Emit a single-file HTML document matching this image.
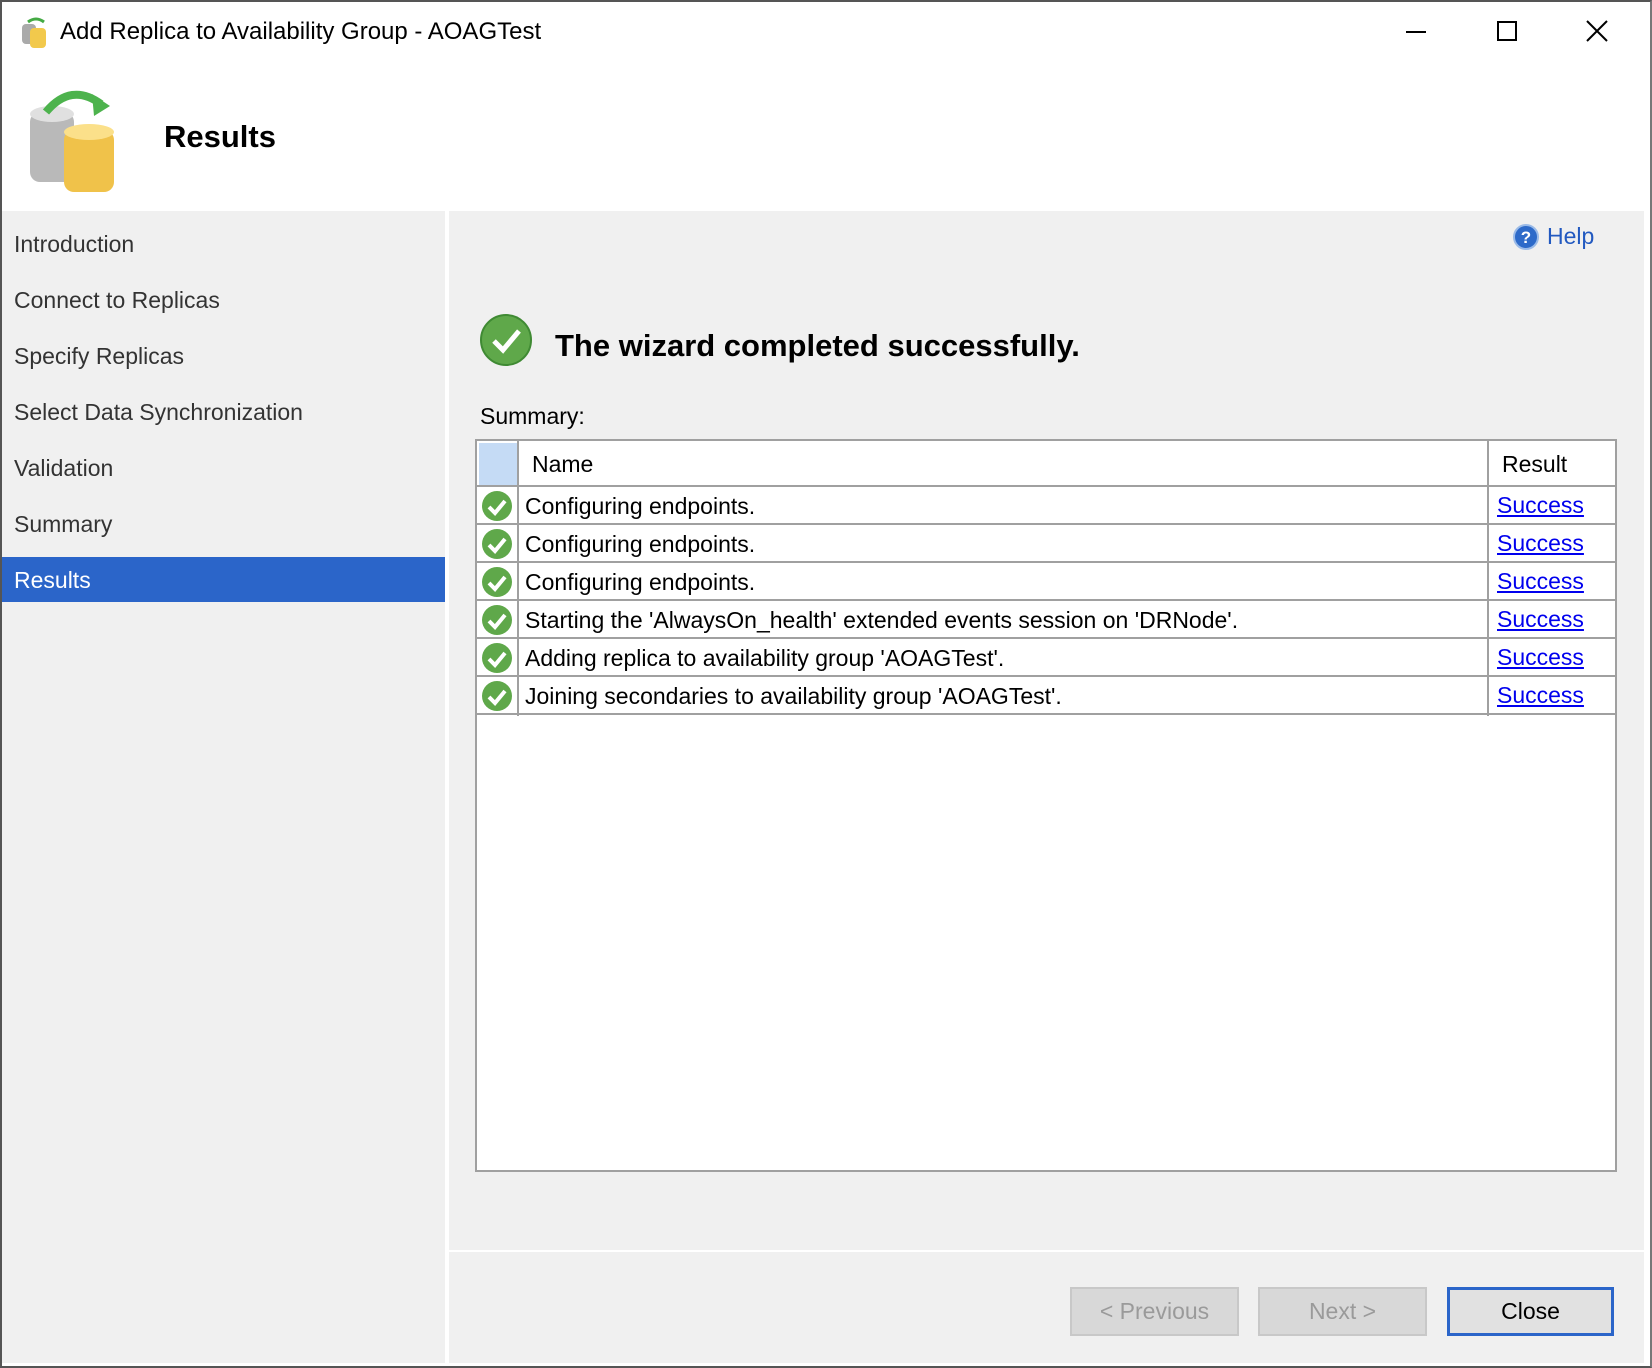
<!DOCTYPE html>
<html><head><meta charset="utf-8"><style>
*{margin:0;padding:0;box-sizing:border-box}
body{width:1652px;height:1368px;background:#fff;font-family:"Liberation Sans",sans-serif;position:relative;overflow:hidden;color:#000}
.a{position:absolute}
.side{left:2px;top:211px;width:443px;height:1152px;background:#f0f0f0}
.si{position:absolute;left:12px;font-size:23px;color:#333}
.main{left:449px;top:211px;width:1195px;height:1152px;background:#f0f0f0}
.tbl{left:475px;top:439px;width:1142px;height:733px;background:#fff;border:2px solid #a0a0a0}
.row{position:absolute;left:0;width:1138px;height:38px;border-bottom:2px solid #a0a0a0;font-size:23px}
.row .t{position:absolute;left:48px;top:6px}
.row .l{position:absolute;left:1020px;top:5px;color:#0000ee;text-decoration:underline}
.btn{position:absolute;top:1287px;height:49px;border:2px solid #c8c8c8;background:#d8d8d8;color:#9a9a9a;font-size:23px;text-align:center;line-height:45px}
</style></head><body>
<div class="a" style="left:0;top:0;width:1652px;height:1368px;border:2px solid #555;border-right:2px solid #777;border-bottom:2px solid #555"></div>
<svg class="a" style="left:20px;top:16px" width="30" height="34"><rect x="2" y="8" width="14" height="20" rx="4" fill="#aaa"/><rect x="10" y="12" width="16" height="20" rx="4" fill="#f2c94c"/><path d="M8 6 Q16 0 24 6" stroke="#4a4" stroke-width="3" fill="none"/></svg>
<div class="a" style="left:60px;top:18px;font-size:24px">Add Replica to Availability Group - AOAGTest</div>
<div class="a" style="left:1406px;top:31px;width:20px;height:2px;background:#000"></div>
<div class="a" style="left:1497px;top:21px;width:20px;height:20px;border:2px solid #000"></div>
<svg class="a" style="left:1586px;top:20px" width="22" height="22"><path d="M1 1L21 21M21 1L1 21" stroke="#000" stroke-width="2"/></svg>
<svg class="a" style="left:26px;top:82px" width="100" height="115">
<rect x="4" y="30" width="44" height="70" rx="10" fill="#b9b9b9"/><ellipse cx="26" cy="32" rx="22" ry="8" fill="#e0e0e0"/>
<rect x="38" y="48" width="50" height="62" rx="10" fill="#f0c24a"/><ellipse cx="63" cy="50" rx="25" ry="8" fill="#fbe08a"/>
<path d="M20 30 Q45 0 75 22" stroke="#4db34d" stroke-width="8" fill="none"/><path d="M66 12 L84 24 L68 34Z" fill="#4db34d"/>
</svg>
<div class="a" style="left:164px;top:119px;font-size:31px;font-weight:bold">Results</div>
<div class="a side">
<div class="si" style="top:20px">Introduction</div>
<div class="si" style="top:76px">Connect to Replicas</div>
<div class="si" style="top:132px">Specify Replicas</div>
<div class="si" style="top:188px">Select Data Synchronization</div>
<div class="si" style="top:244px">Validation</div>
<div class="si" style="top:300px">Summary</div>
<div class="a" style="left:0;top:346px;width:443px;height:45px;background:#2b65c9"></div>
<div class="si" style="top:356px;color:#fff">Results</div>
</div>
<div class="a main">
<div class="a" style="left:0;top:1039px;width:1195px;height:2px;background:#fff"></div>
</div>
<svg class="a" style="left:1512px;top:223px" width="28" height="28"><circle cx="14" cy="14" r="12" fill="#2d6ac9" stroke="#9bbbe8" stroke-width="2"/><text x="14" y="20" font-size="17" font-weight="bold" fill="#fff" text-anchor="middle" font-family="Liberation Sans">?</text></svg>
<div class="a" style="left:1547px;top:223px;font-size:23px;color:#2259c0">Help</div>
<svg class="a" style="left:479px;top:313px" width="54" height="54"><circle cx="27" cy="27" r="25" fill="#5fa84a" stroke="#3f8a33" stroke-width="2"/><path d="M15 28 L24 37 L40 18" stroke="#fff" stroke-width="5" fill="none"/></svg>
<div class="a" style="left:555px;top:328px;font-size:31px;font-weight:bold">The wizard completed successfully.</div>
<div class="a" style="left:480px;top:403px;font-size:23px">Summary:</div>
<div class="a tbl">
<div class="a" style="left:2px;top:2px;width:38px;height:42px;background:#c5dbf5"></div>
<div class="a" style="left:40px;top:0;width:2px;height:275px;background:#a0a0a0"></div>
<div class="a" style="left:1010px;top:0;width:2px;height:275px;background:#a0a0a0"></div>
<div class="a" style="left:55px;top:10px;font-size:23px">Name</div>
<div class="a" style="left:1025px;top:10px;font-size:23px">Result</div>
<div class="a" style="left:0;top:44px;width:1138px;height:2px;background:#a0a0a0"></div>
<div class="row" style="top:46px"><svg class="a" style="left:4px;top:3px" width="32" height="32"><circle cx="16" cy="16" r="15" fill="#5fa84a"/><path d="M8 17 L14 23 L24 11" stroke="#fff" stroke-width="4" fill="none"/></svg><span class="t">Configuring endpoints.</span><span class="l">Success</span></div>
<div class="row" style="top:84px"><svg class="a" style="left:4px;top:3px" width="32" height="32"><circle cx="16" cy="16" r="15" fill="#5fa84a"/><path d="M8 17 L14 23 L24 11" stroke="#fff" stroke-width="4" fill="none"/></svg><span class="t">Configuring endpoints.</span><span class="l">Success</span></div>
<div class="row" style="top:122px"><svg class="a" style="left:4px;top:3px" width="32" height="32"><circle cx="16" cy="16" r="15" fill="#5fa84a"/><path d="M8 17 L14 23 L24 11" stroke="#fff" stroke-width="4" fill="none"/></svg><span class="t">Configuring endpoints.</span><span class="l">Success</span></div>
<div class="row" style="top:160px"><svg class="a" style="left:4px;top:3px" width="32" height="32"><circle cx="16" cy="16" r="15" fill="#5fa84a"/><path d="M8 17 L14 23 L24 11" stroke="#fff" stroke-width="4" fill="none"/></svg><span class="t">Starting the 'AlwaysOn_health' extended events session on 'DRNode'.</span><span class="l">Success</span></div>
<div class="row" style="top:198px"><svg class="a" style="left:4px;top:3px" width="32" height="32"><circle cx="16" cy="16" r="15" fill="#5fa84a"/><path d="M8 17 L14 23 L24 11" stroke="#fff" stroke-width="4" fill="none"/></svg><span class="t">Adding replica to availability group 'AOAGTest'.</span><span class="l">Success</span></div>
<div class="row" style="top:236px"><svg class="a" style="left:4px;top:3px" width="32" height="32"><circle cx="16" cy="16" r="15" fill="#5fa84a"/><path d="M8 17 L14 23 L24 11" stroke="#fff" stroke-width="4" fill="none"/></svg><span class="t">Joining secondaries to availability group 'AOAGTest'.</span><span class="l">Success</span></div>
</div>
<div class="btn" style="left:1070px;width:169px">&lt; Previous</div>
<div class="btn" style="left:1258px;width:169px">Next &gt;</div>
<div class="btn" style="left:1447px;width:167px;border:3px solid #2b65c9;background:#e1e1e1;color:#000;line-height:43px">Close</div>
</body></html>
